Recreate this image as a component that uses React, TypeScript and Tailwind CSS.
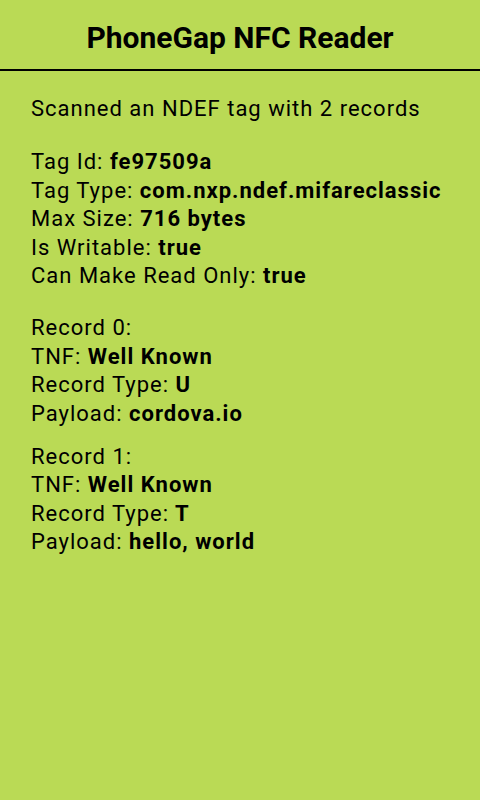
const font = { fontFamily: 'Roboto, "Noto Sans", sans-serif' };

type Field = { label: string; value?: string };

function Block({ fields, className }: { fields: Field[]; className?: string }) {
  return (
    <div className={className}>
      {fields.map((f, i) => (
        <div key={i}>
          {f.label}
          {f.value !== undefined && <strong className="font-bold"> {f.value}</strong>}
        </div>
      ))}
    </div>
  );
}

export default function App() {
  const tag: Field[] = [
    { label: 'Tag Id:', value: 'fe97509a' },
    { label: 'Tag Type:', value: 'com.nxp.ndef.mifareclassic' },
    { label: 'Max Size:', value: '716 bytes' },
    { label: 'Is Writable:', value: 'true' },
    { label: 'Can Make Read Only:', value: 'true' },
  ];
  const records: Field[][] = [
    [
      { label: 'Record 0:' },
      { label: 'TNF:', value: 'Well Known' },
      { label: 'Record Type:', value: 'U' },
      { label: 'Payload:', value: 'cordova.io' },
    ],
    [
      { label: 'Record 1:' },
      { label: 'TNF:', value: 'Well Known' },
      { label: 'Record Type:', value: 'T' },
      { label: 'Payload:', value: 'hello, world' },
    ],
  ];

  return (
    <div className="min-h-screen w-[480px] bg-[#bada55] text-black" style={font}>
      <header className="h-[71px] pt-[7px] border-b-2 border-black flex items-center justify-center">
        <h1 className="text-[30px] font-bold leading-none">PhoneGap NFC Reader</h1>
      </header>
      <main className="pt-[24px] px-[31px] text-[22px] leading-[28.5px] tracking-[1px]">
        <p>Scanned an NDEF tag with 2 records</p>
        <Block fields={tag} className="mt-[24.5px]" />
        <Block fields={records[0]} className="mt-[23.5px]" />
        <Block fields={records[1]} className="mt-[14.5px]" />
      </main>
    </div>
  );
}
